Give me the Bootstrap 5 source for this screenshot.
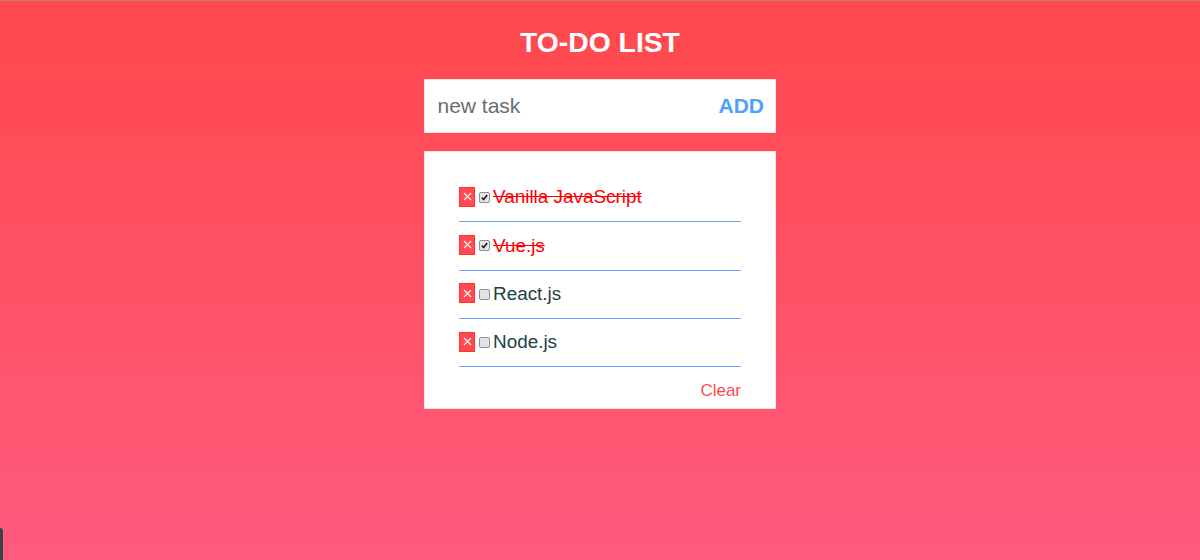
<!DOCTYPE html>
<html lang="en">
<head>
<meta charset="utf-8">
<title>To-Do List</title>
<link href="https://cdn.jsdelivr.net/npm/bootstrap@5.3.0/dist/css/bootstrap.min.css" rel="stylesheet">
<style>
html,body{height:100%;}
body{font-family:"Liberation Sans",Arial,sans-serif;background:linear-gradient(180deg,#ff484c 0%,#ff5b7f 100%);border-top:1px solid #c9777a;overflow:hidden;position:relative;}
.todo-wrap{width:352px;}
.todo-title{font-size:28.3px;font-weight:700;line-height:32px;color:#fff;margin:25px 0 21px;}
.todo-form{height:54px;background:#fff;margin-bottom:18px;padding:0 12px 2px 13.5px;box-shadow:inset 0 0 0 1px #ffe0e2;}
.todo-input{font-size:21px;color:#333;min-width:0;outline:0;margin-top:2px;}
.todo-input::placeholder{color:#6c6c6c;opacity:1;}
.todo-add{font-size:21px;font-weight:700;color:#4da0ff;line-height:1;}
.todo-panel{background:#fff;height:258px;padding:23px 35px 0 35px;box-shadow:inset 0 0 0 1px #ffe0e2;}
.todo-row{height:48.33px;border-bottom:1px solid #5ca8f5;font-size:18.9px;color:#233f42;}
.todo-row.is-done .todo-text{color:#f00;text-decoration:line-through;}
.todo-del{width:16px;height:20px;background:#ff4a50;border:1px solid #f33;color:#fff;margin:0 4px 2px 0;}
.todo-box{appearance:none;width:11px;height:11px;margin:0 3px 0 0;border:1px solid #8f8f8f;border-radius:2px;background:#e4e4e4;flex:none;position:relative;}
.todo-box:checked{background:#e8e8e8 url("data:image/svg+xml,%3Csvg xmlns='http://www.w3.org/2000/svg' viewBox='0 0 11 11'%3E%3Cpath d='M2.2 5.6 4.4 8 8.8 2.6' fill='none' stroke='%23222' stroke-width='2'/%3E%3C/svg%3E") center/100% no-repeat;}
.todo-clear{font-size:17px;color:#ff4a50;line-height:20px;margin-top:13.3px;text-decoration:none;}
.edge-tab{position:absolute;left:0;bottom:0;width:3px;height:32px;background:#3a4348;border-top-right-radius:3px;}
</style>
</head>
<body>
<div class="todo-wrap mx-auto">
  <h1 class="todo-title text-center">TO-DO LIST</h1>
  <form class="todo-form d-flex align-items-center">
    <input class="todo-input flex-grow-1 border-0 p-0 bg-transparent shadow-none" type="text" placeholder="new task" aria-label="new task">
    <button class="todo-add btn border-0 p-0" type="button">ADD</button>
  </form>
  <div class="todo-panel d-flex flex-column">
    <div class="todo-row is-done d-flex align-items-center">
      <span class="todo-del d-flex align-items-center justify-content-center"><svg width="9" height="9" viewBox="0 0 9 9"><path d="M1 1 8 8M8 1 1 8" stroke="#fff" stroke-width="1.1"/></svg></span>
      <input class="todo-box" type="checkbox" checked aria-label="Vanilla JavaScript">
      <span class="todo-text">Vanilla JavaScript</span>
    </div>
    <div class="todo-row is-done d-flex align-items-center">
      <span class="todo-del d-flex align-items-center justify-content-center"><svg width="9" height="9" viewBox="0 0 9 9"><path d="M1 1 8 8M8 1 1 8" stroke="#fff" stroke-width="1.1"/></svg></span>
      <input class="todo-box" type="checkbox" checked aria-label="Vue.js">
      <span class="todo-text">Vue.js</span>
    </div>
    <div class="todo-row d-flex align-items-center">
      <span class="todo-del d-flex align-items-center justify-content-center"><svg width="9" height="9" viewBox="0 0 9 9"><path d="M1 1 8 8M8 1 1 8" stroke="#fff" stroke-width="1.1"/></svg></span>
      <input class="todo-box" type="checkbox" aria-label="React.js">
      <span class="todo-text">React.js</span>
    </div>
    <div class="todo-row d-flex align-items-center">
      <span class="todo-del d-flex align-items-center justify-content-center"><svg width="9" height="9" viewBox="0 0 9 9"><path d="M1 1 8 8M8 1 1 8" stroke="#fff" stroke-width="1.1"/></svg></span>
      <input class="todo-box" type="checkbox" aria-label="Node.js">
      <span class="todo-text">Node.js</span>
    </div>
    <a class="todo-clear text-end" href="#">Clear</a>
  </div>
</div>
<div class="edge-tab"></div>
<script src="https://cdn.jsdelivr.net/npm/bootstrap@5.3.0/dist/js/bootstrap.bundle.min.js"></script>
</body>
</html>
